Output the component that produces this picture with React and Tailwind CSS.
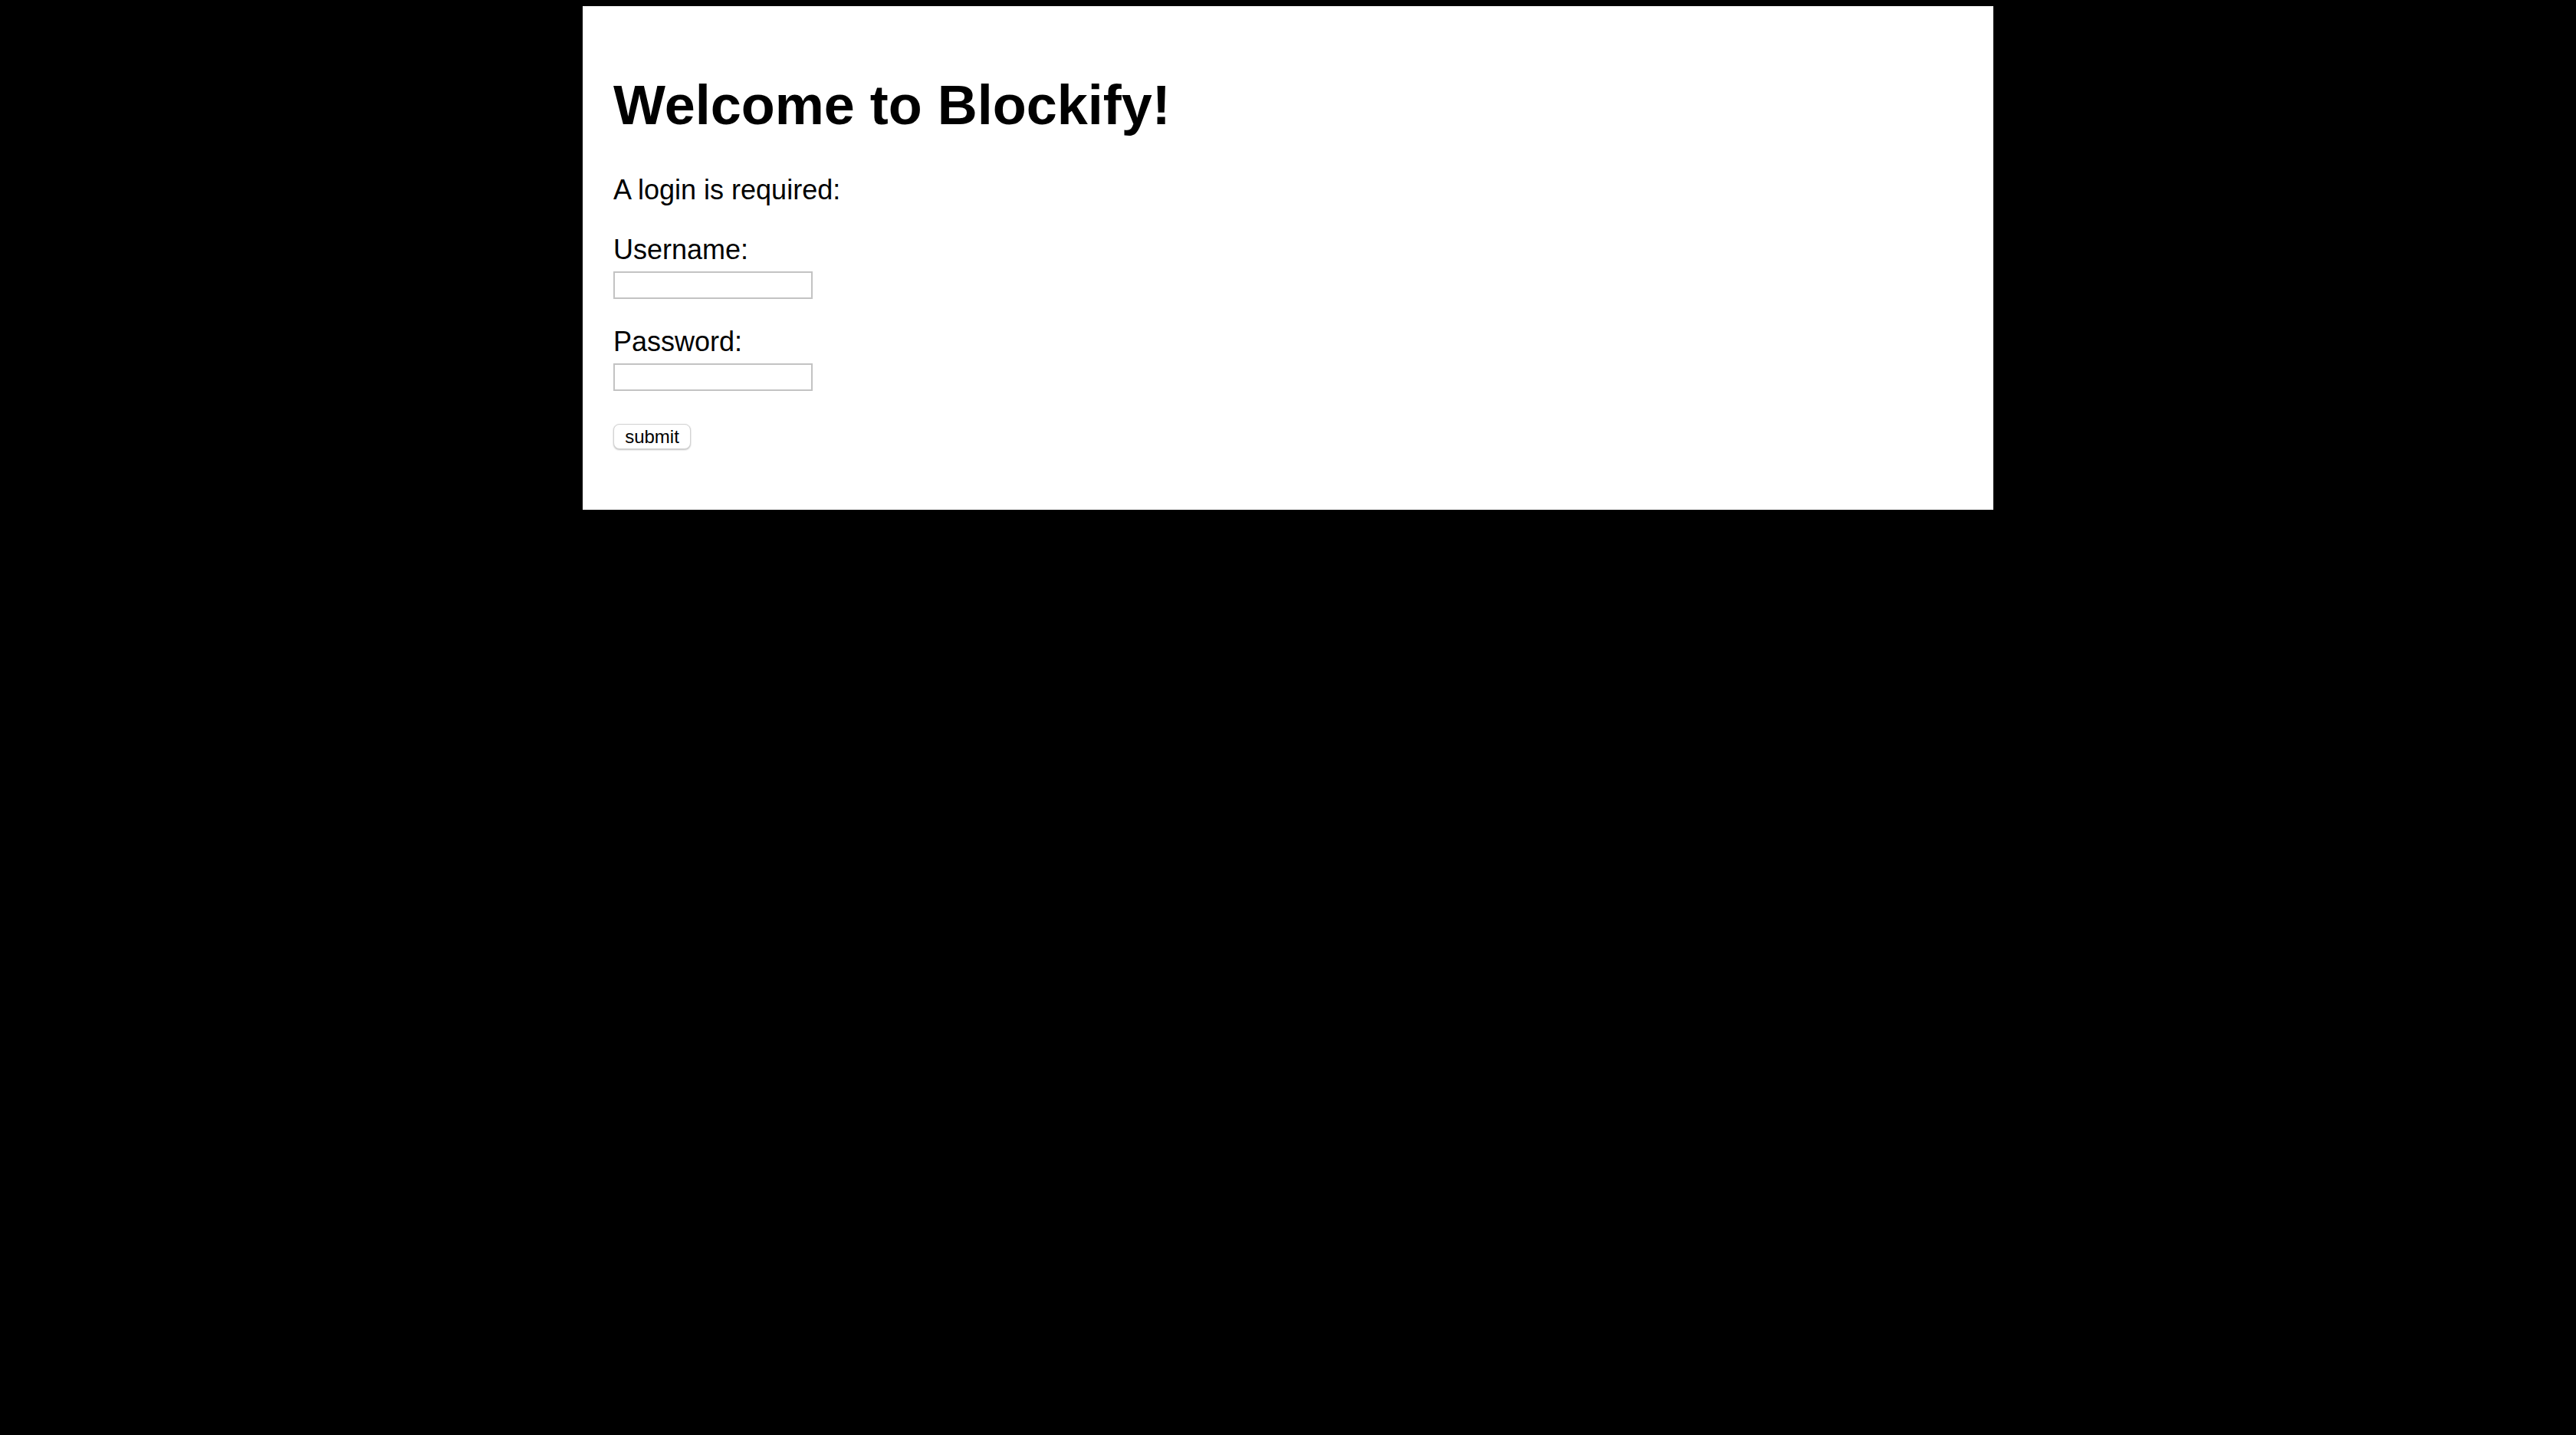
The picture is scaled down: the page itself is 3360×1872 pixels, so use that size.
import React, { useState } from "react";

const App = () => {
  const [username, setUsername] = useState("");
  const [password, setPassword] = useState("");

  return (
    <div className="min-h-screen bg-black pt-[8px] font-['Liberation_Sans',Arial,sans-serif] text-black">
      <div className="mx-auto w-[1840px] bg-white px-[40px] pt-[40px] pb-[79px]">
        <h1 className="mt-[48px] mb-[48px] text-[72px] font-bold leading-[83px]">Welcome to Blockify!</h1>
        <p className="text-[36px] leading-[41px]">A login is required:</p>

        <form onSubmit={(e) => e.preventDefault()}>
          <div className="mt-[37px]">
            <label className="block text-[36px] leading-[41px]">Username:</label>
            <input
              type="text"
              className="mt-[8px] block h-[36px] w-[260px] border-2 border-[#c3c3c3] bg-white px-1 text-[26px] outline-none"
              value={username}
              onChange={(e) => setUsername(e.target.value)}
            />
          </div>

          <div className="mt-[35px]">
            <label className="block text-[36px] leading-[41px]">Password:</label>
            <input
              type="password"
              className="mt-[8px] block h-[36px] w-[260px] border-2 border-[#c3c3c3] bg-white px-1 text-[26px] outline-none"
              value={password}
              onChange={(e) => setPassword(e.target.value)}
            />
          </div>

          <button
            type="submit"
            className="mt-[43px] block h-[33px] w-[101px] rounded-[8px] border border-[#d2d2d2] bg-white text-[24px] leading-[30px] shadow-[0_1px_2px_rgba(0,0,0,0.25)]"
          >
            submit
          </button>
        </form>
      </div>
    </div>
  );
};

export default App;
